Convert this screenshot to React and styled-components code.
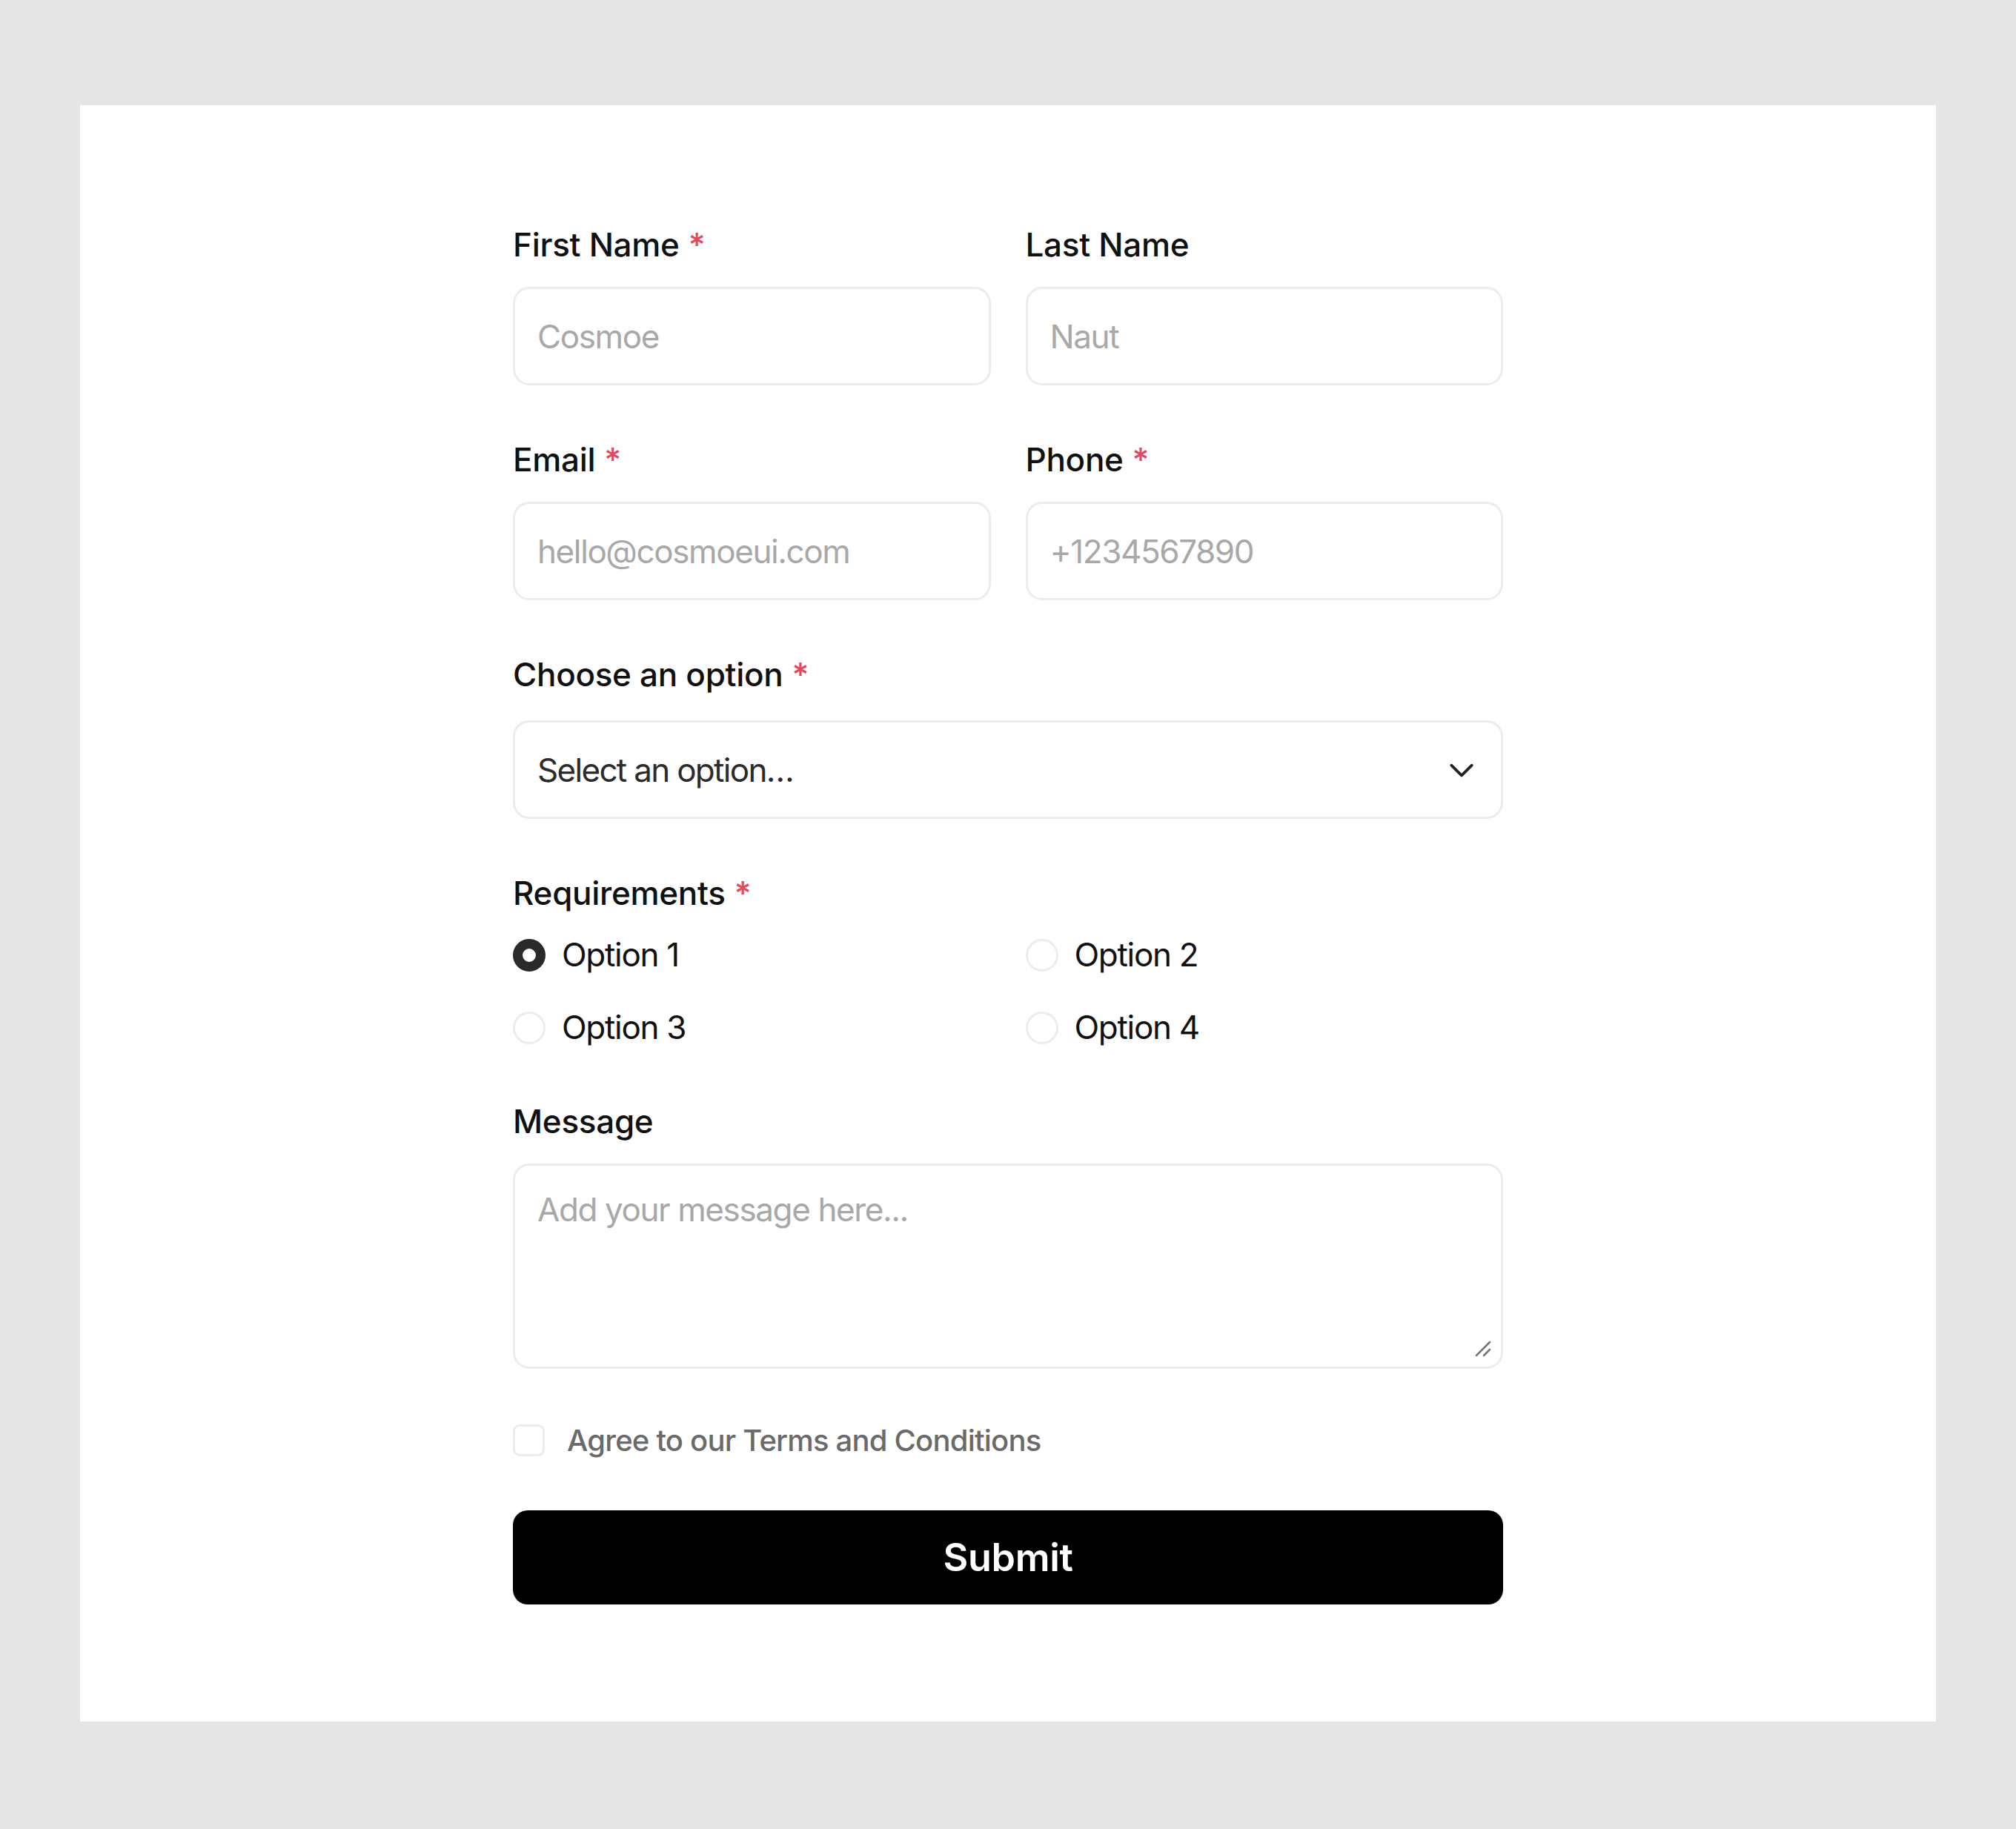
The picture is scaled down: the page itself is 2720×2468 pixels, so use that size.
import React from "react";
import styled, { createGlobalStyle } from "styled-components";

const Global = createGlobalStyle`
  html, body { margin: 0; padding: 0; background: #e5e5e5; }
  body { font-family: Inter, "Noto Sans", sans-serif; -webkit-font-smoothing: antialiased; }
  * { box-sizing: border-box; }
`;

const Page = styled.div`
  padding: 142px 108px 143px;
  background: #e5e5e5;
`;

const Card = styled.div`
  background: #ffffff;
  padding: 162px 0 158px;
  display: flex;
  justify-content: center;
`;

const Form = styled.form`
  width: 1336px;
  display: flex;
  flex-direction: column;
  gap: 74px;
`;

const Row = styled.div`
  display: grid;
  grid-template-columns: 1fr 1fr;
  column-gap: 47px;
`;

const Field = styled.div`
  display: flex;
  flex-direction: column;
  gap: ${(p) => p.$gap || 30}px;
`;

const Label = styled.label`
  font-size: 44px;
  line-height: 53px;
  font-weight: 500;
  color: #111111;
  letter-spacing: -0.3px;
`;

const Star = styled.span`
  color: #e8455e;
  margin-left: 12px;
`;

const controlBase = `
  width: 100%;
  border: 3px solid #ececec;
  border-radius: 22px;
  background: #ffffff;
  font-family: Inter, "Noto Sans", sans-serif;
  font-size: 44px;
  letter-spacing: -1.4px;
  outline: none;
`;

const Input = styled.input`
  ${controlBase}
  height: 133px;
  padding: 0 30px;
  color: #111;
  &::placeholder { color: #a8a8a8; }
`;

const SelectBox = styled.div`
  ${controlBase}
  height: 133px;
  padding: 0 31px 0 30px;
  display: flex;
  align-items: center;
  justify-content: space-between;
  color: #2b2b2b;
  letter-spacing: -1.7px;
`;

const TextAreaWrap = styled.div`
  position: relative;
`;

const TextArea = styled.textarea`
  ${controlBase}
  display: block;
  height: 277px;
  padding: 32px 30px;
  resize: none;
  color: #111;
  &::placeholder { color: #a8a8a8; }
`;

const Grip = styled.svg`
  position: absolute;
  right: 14px;
  bottom: 14px;
  width: 26px;
  height: 26px;
`;

const OptionsGrid = styled.div`
  display: grid;
  grid-template-columns: 1fr 1fr;
  column-gap: 47px;
  row-gap: 45px;
`;

const OptionItem = styled.label`
  display: flex;
  align-items: center;
  gap: 22px;
  font-size: 44px;
  line-height: 53px;
  color: #111;
  letter-spacing: -1.3px;
`;

const Radio = styled.span`
  width: 44px;
  height: 44px;
  border-radius: 50%;
  flex: none;
  border: ${(p) => (p.$checked ? "13px solid #2a2a2a" : "3px solid #ececec")};
  background: #fff;
`;

const CheckRow = styled.label`
  display: flex;
  align-items: center;
  gap: 30px;
  margin-top: -4px;
  font-size: 40px;
  line-height: 53px;
  font-weight: 500;
  color: #6a6a6a;
  letter-spacing: -0.8px;
`;

const CheckBox = styled.span`
  width: 43px;
  height: 43px;
  flex: none;
  border: 3px solid #ececec;
  border-radius: 9px;
  background: #fff;
`;

const Submit = styled.button`
  height: 127px;
  width: 100%;
  border: none;
  border-radius: 20px;
  background: #000;
  color: #fff;
  font-family: Inter, "Noto Sans", sans-serif;
  font-size: 52px;
  font-weight: 600;
  letter-spacing: -0.3px;
  margin-top: -6px;
`;

const Chevron = () => (
  <svg width="44" height="44" viewBox="0 0 24 24" fill="none" stroke="#222" strokeWidth="2" strokeLinecap="round" strokeLinejoin="round">
    <path d="M4.5 8.5l7.5 7.5 7.5-7.5" />
  </svg>
);

const TextField = ({ label, required, placeholder }) => (
  <Field>
    <Label>
      {label}
      {required && <Star>*</Star>}
    </Label>
    <Input placeholder={placeholder} />
  </Field>
);

export default function App() {
  const options = ["Option 1", "Option 2", "Option 3", "Option 4"];
  return (
    <Page>
      <Global />
      <Card>
        <Form onSubmit={(e) => e.preventDefault()}>
          <Row>
            <TextField label="First Name" required placeholder="Cosmoe" />
            <TextField label="Last Name" placeholder="Naut" />
          </Row>
          <Row>
            <TextField label="Email" required placeholder="hello@cosmoeui.com" />
            <TextField label="Phone" required placeholder="+1234567890" />
          </Row>
          <Field $gap={35}>
            <Label>
              Choose an option<Star>*</Star>
            </Label>
            <SelectBox>
              <span>Select an option…</span>
              <Chevron />
            </SelectBox>
          </Field>
          <Field>
            <Label>
              Requirements<Star>*</Star>
            </Label>
            <OptionsGrid>
              {options.map((o, i) => (
                <OptionItem key={o}>
                  <Radio $checked={i === 0} />
                  {o}
                </OptionItem>
              ))}
            </OptionsGrid>
          </Field>
          <Field>
            <Label>Message</Label>
            <TextAreaWrap>
              <TextArea placeholder="Add your message here..." />
              <Grip viewBox="0 0 26 26" fill="none" stroke="#777" strokeWidth="2.6" strokeLinecap="round">
                <path d="M4 22L22 4" />
                <path d="M14 22L22 14" />
              </Grip>
            </TextAreaWrap>
          </Field>
          <CheckRow>
            <CheckBox />
            Agree to our Terms and Conditions
          </CheckRow>
          <Submit type="submit">Submit</Submit>
        </Form>
      </Card>
    </Page>
  );
}
